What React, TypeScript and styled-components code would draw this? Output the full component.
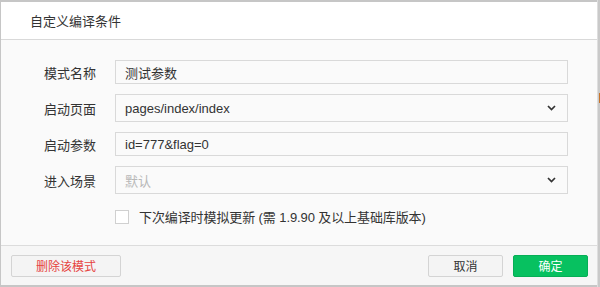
import {FC} from "react";
import styled, {createGlobalStyle} from "styled-components";

const GlobalStyle = createGlobalStyle`
  html, body {
    margin: 0;
    padding: 0;
    background: #d6d6d6;
  }
  body {
    font-family: "Liberation Sans", "Noto Sans CJK SC", sans-serif;
    font-size: 13px;
    color: #333;
  }
`;

const Page = styled.div`
  display: flex;
  width: 600px;
  height: 287px;
`;

const Dialog = styled.div`
  width: 597px;
  height: 287px;
  box-sizing: border-box;
  display: flex;
  flex-direction: column;
  border-top: 2px solid #c6c6c6;
  border-left: 1px solid #c6c6c6;
  border-bottom: 2px solid #c6c6c6;
  background: #fafafa;
`;

const Edge = styled.div`
  flex: 1;
  display: flex;
  flex-direction: column;
  background: #c9c9c9;
  border-left: 1px solid #dedede;
`;

const EdgeMark = styled.div`
  margin-top: 93px;
  margin-left: 1px;
  height: 10px;
  background: #c8742a;
`;

const Header = styled.div`
  height: 38px;
  box-sizing: border-box;
  display: flex;
  align-items: center;
  padding: 0 0 0 29px;
  background: #fff;
  border-bottom: 1px solid #d9d9d9;
`;

const Title = styled.span`
  color: #333;
`;

const Body = styled.div`
  flex: 1;
  display: flex;
  flex-direction: column;
  gap: 10px;
  padding: 20px 29px 0 0;
`;

const Row = styled.div`
  display: flex;
  align-items: center;
  gap: 19px;
`;

const Label = styled.div`
  width: 95px;
  flex-shrink: 0;
  text-align: right;
  color: #333;
`;

const Field = styled.div<{ $tall?: boolean }>`
  flex: 1;
  height: ${(p) => (p.$tall ? 28 : 24)}px;
  box-sizing: border-box;
  border: 1px solid #d9d9d9;
  background: #fafafa;
  display: flex;
  align-items: center;
  justify-content: space-between;
  padding: 0 11px 0 9px;
`;

const Value = styled.span<{ $muted?: boolean }>`
  color: ${(p) => (p.$muted ? "#b8b8b8" : "#333")};
`;

const CheckRow = styled.label`
  display: flex;
  align-items: center;
  gap: 10px;
  margin: 3px 0 0 114px;
  color: #333;
  letter-spacing: -0.1px;
`;

const Box = styled.span`
  width: 14px;
  height: 14px;
  box-sizing: border-box;
  border: 1px solid #d0d0d0;
  background: #fff;
`;

const Footer = styled.div`
  height: 40px;
  box-sizing: border-box;
  border-top: 1px solid #dcdcdc;
  background: #f6f6f6;
  display: flex;
  align-items: center;
  padding: 0 9px 0 10px;
  gap: 10px;
`;

const Button = styled.button<{ $kind?: "danger" | "primary" }>`
  height: 22px;
  box-sizing: border-box;
  border-radius: 2px;
  font: inherit;
  font-size: 12px;
  padding: 0;
  width: ${(p) => (p.$kind === "danger" ? 110 : 75)}px;
  border: 1px solid ${(p) => (p.$kind === "primary" ? "#06ae56" : "#d4d4d4")};
  background: ${(p) => (p.$kind === "primary" ? "#07c160" : "#f4f4f4")};
  color: ${(p) =>
    p.$kind === "primary" ? "#fff" : p.$kind === "danger" ? "#e64340" : "#333"};
`;

const Spacer = styled.div`
  flex: 1;
`;

const Chevron: FC = () => (
  <svg width="9" height="6" viewBox="0 0 9 6">
    <polyline points="1,1 4.5,4.5 8,1" fill="none" stroke="#333" strokeWidth="1.7" />
  </svg>
);

const App: FC = () => {
  return (
    <>
      <GlobalStyle />
      <Page>
        <Dialog>
          <Header>
            <Title>自定义编译条件</Title>
          </Header>
          <Body>
            <Row>
              <Label>模式名称</Label>
              <Field>
                <Value>测试参数</Value>
              </Field>
            </Row>
            <Row>
              <Label>启动页面</Label>
              <Field $tall>
                <Value>pages/index/index</Value>
                <Chevron />
              </Field>
            </Row>
            <Row>
              <Label>启动参数</Label>
              <Field>
                <Value>id=777&amp;flag=0</Value>
              </Field>
            </Row>
            <Row>
              <Label>进入场景</Label>
              <Field $tall>
                <Value $muted>默认</Value>
                <Chevron />
              </Field>
            </Row>
            <CheckRow>
              <Box />
              下次编译时模拟更新 (需 1.9.90 及以上基础库版本)
            </CheckRow>
          </Body>
          <Footer>
            <Button $kind="danger">删除该模式</Button>
            <Spacer />
            <Button>取消</Button>
            <Button $kind="primary">确定</Button>
          </Footer>
        </Dialog>
        <Edge>
          <EdgeMark />
        </Edge>
      </Page>
    </>
  );
};

export default App;
